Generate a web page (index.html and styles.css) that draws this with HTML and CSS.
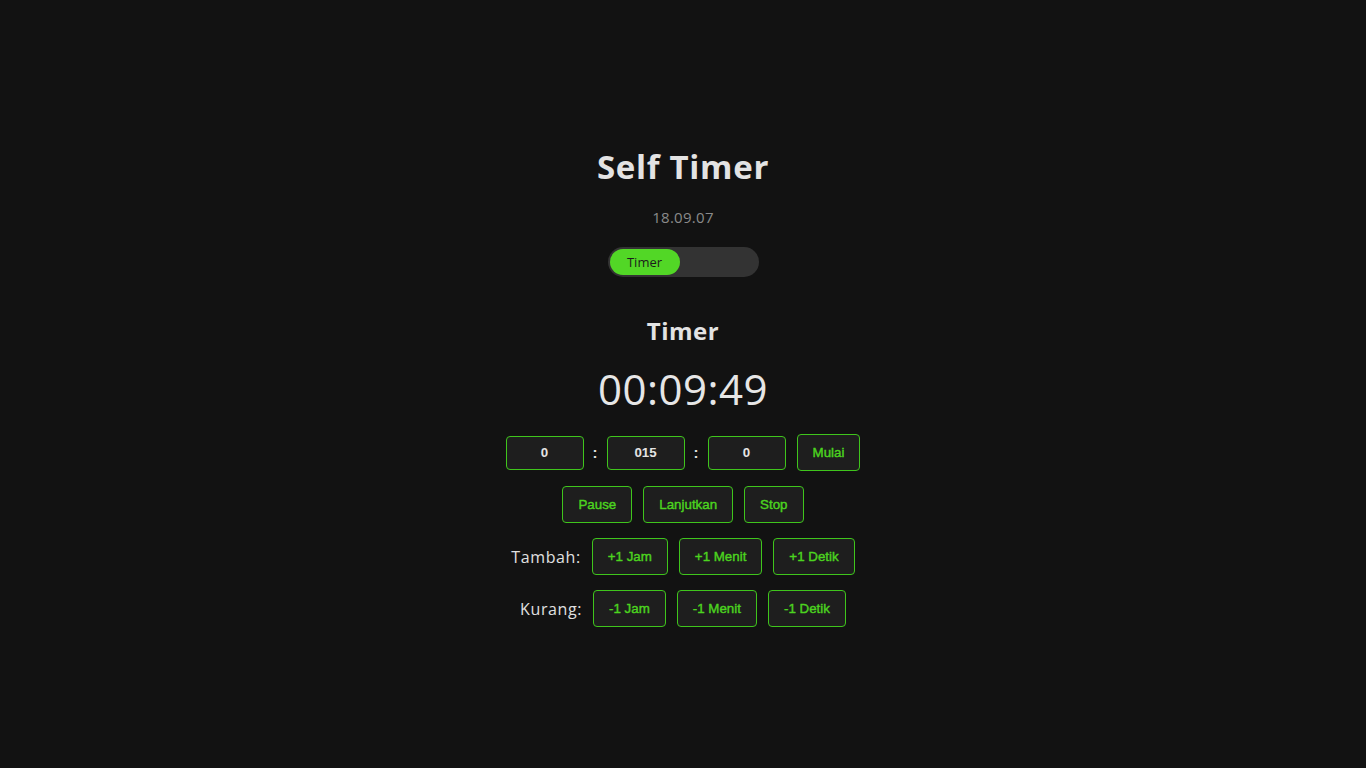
FILE: index.html
```html
<!DOCTYPE html>
<html lang="id">
<head>
<meta charset="utf-8">
<title>Self Timer</title>
<link rel="stylesheet" href="styles.css">
</head>
<body>
<main class="app">
  <h1 class="title">Self Timer</h1>
  <div class="date">18.09.07</div>
  <div class="toggle">
    <span class="toggle-pill">Timer</span>
  </div>
  <h2 class="subtitle">Timer</h2>
  <div class="time">00:09:49</div>

  <div class="row row-inputs">
    <input class="field" type="text" value="0">
    <span class="colon">:</span>
    <input class="field" type="text" value="015">
    <span class="colon">:</span>
    <input class="field" type="text" value="0">
    <button class="btn">Mulai</button>
  </div>

  <div class="row">
    <button class="btn">Pause</button>
    <button class="btn">Lanjutkan</button>
    <button class="btn">Stop</button>
  </div>

  <div class="row">
    <span class="label">Tambah:</span>
    <button class="btn">+1 Jam</button>
    <button class="btn">+1 Menit</button>
    <button class="btn">+1 Detik</button>
  </div>

  <div class="row">
    <span class="label">Kurang:</span>
    <button class="btn">-1 Jam</button>
    <button class="btn">-1 Menit</button>
    <button class="btn">-1 Detik</button>
  </div>
</main>
</body>
</html>
```

FILE: styles.css
```css
html, body {
  margin: 0;
  padding: 0;
  background: #121212;
}

body {
  font-family: "Open Sans", "DejaVu Sans", sans-serif;
  color: #e0e0e0;
}

.app {
  display: flex;
  flex-direction: column;
  align-items: center;
  padding-top: 147px;
}

.title {
  margin: 0;
  font-size: 33px;
  line-height: 40px;
  font-weight: 700;
  letter-spacing: 0.7px;
  color: #e3e3e3;
}

.date {
  margin-top: 20px;
  font-size: 15px;
  line-height: 20px;
  color: #8a8a8a;
  letter-spacing: 0.3px;
}

.toggle {
  margin-top: 20px;
  width: 147px;
  height: 26px;
  padding: 2px;
  border-radius: 16px;
  background: #333333;
  display: flex;
  align-items: center;
}

.toggle-pill {
  width: 70px;
  height: 26px;
  border-radius: 13px;
  background: #52d726;
  color: #1c1c1c;
  font-size: 13px;
  line-height: 26px;
  text-align: center;
}

.subtitle {
  margin: 39px 0 0;
  font-size: 24px;
  line-height: 30px;
  font-weight: 700;
  letter-spacing: 0.5px;
  color: #e3e3e3;
}

.time {
  margin-top: 18px;
  font-size: 42px;
  line-height: 50px;
  font-weight: 400;
  letter-spacing: 0.5px;
  color: #e6e6e6;
}

.row {
  display: flex;
  align-items: center;
  justify-content: center;
  gap: 11px;
  margin-top: 15px;
}

.row-inputs {
  gap: 9px;
  margin-top: 20px;
}

.row-inputs .btn {
  margin-left: 2px;
}

.field {
  box-sizing: border-box;
  width: 78px;
  height: 34px;
  padding: 8px;
  border: 1px solid #3fc51c;
  border-radius: 4px;
  background: #1e1e1e;
  color: #e4e4e4;
  font-family: "Liberation Sans", Arial, sans-serif;
  font-size: 13.333px;
  font-weight: 700;
  text-align: center;
  outline: none;
}

.colon {
  font-family: "Liberation Sans", Arial, sans-serif;
  font-size: 15px;
  font-weight: 700;
  color: #e0e0e0;
}

.btn {
  box-sizing: border-box;
  height: 37px;
  padding: 0 15px;
  border: 1px solid #3fc51c;
  border-radius: 4px;
  background: #1e1e1e;
  color: #4cd41f;
  font-family: "Liberation Sans", Arial, sans-serif;
  font-size: 13.333px;
  line-height: 15px;
  -webkit-text-stroke: 0.4px #4cd41f;
  cursor: pointer;
}

.label {
  font-size: 16px;
  letter-spacing: 0.6px;
  color: #e0e0e0;
}
```
